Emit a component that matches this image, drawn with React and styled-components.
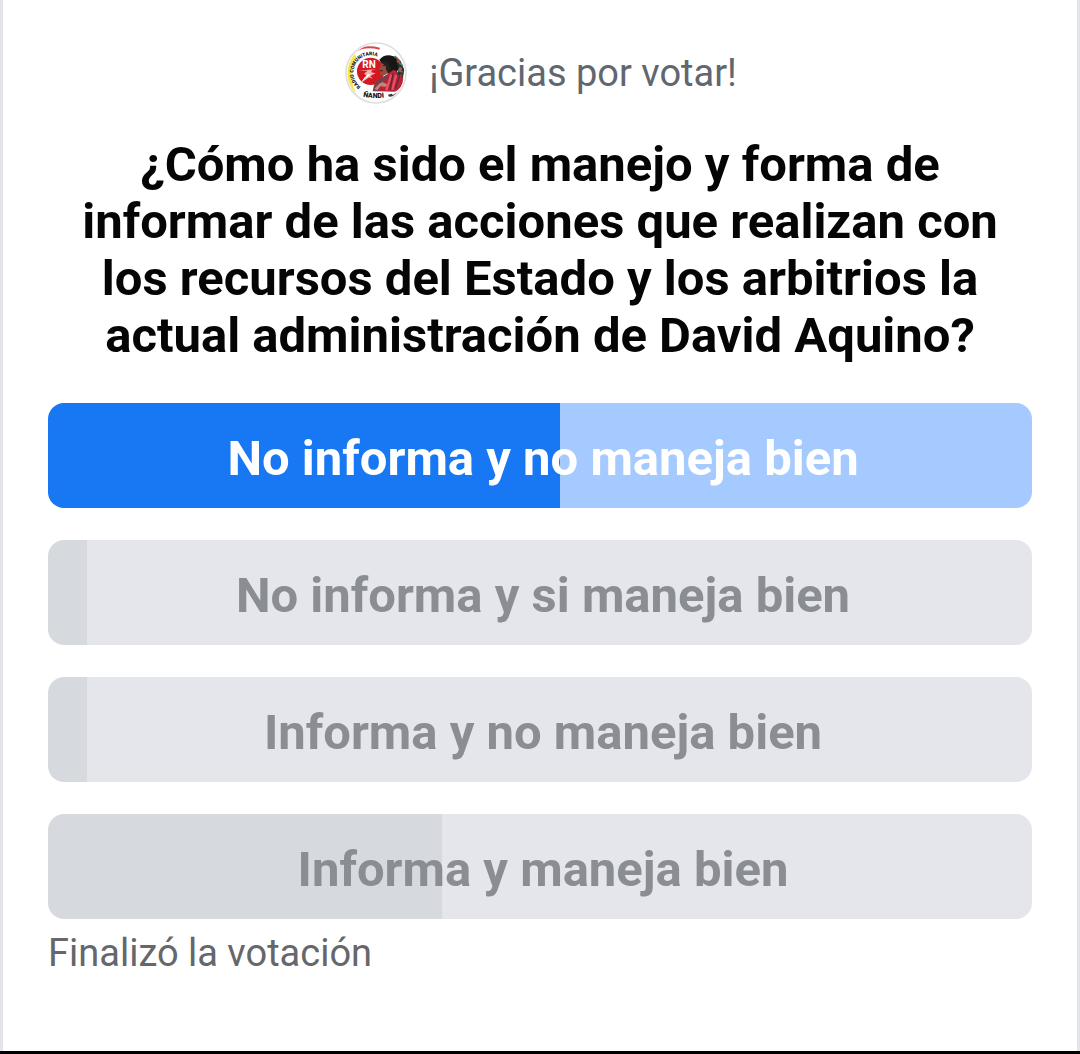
import React from "react";
import styled, { createGlobalStyle } from "styled-components";

const poll = {
  question:
    "¿Cómo ha sido el manejo y forma de informar de las acciones que realizan con los recursos del Estado y los arbitrios la actual administración de David Aquino?",
  options: [
    { label: "No informa y no maneja bien", percent: 52, chosen: true },
    { label: "No informa y si maneja bien", percent: 4 },
    { label: "Informa y no maneja bien", percent: 4 },
    { label: "Informa y maneja bien", percent: 40 },
  ],
};

const StationLogo = () => (
  <Logo viewBox="0 0 186 186" aria-hidden="true">
    <defs>
      <clipPath id="disc">
        <circle cx="93" cy="93" r="86" />
      </clipPath>
      <path id="ring" d="M47 134 A52 52 0 1 1 112 53" />
      <path id="base" d="M54 164 Q88 172 136 164" />
    </defs>
    <circle cx="93" cy="93" r="90" fill="#fff" stroke="#dfdfdf" strokeWidth="5" />
    <g clipPath="url(#disc)">
      <path d="M28 36 Q-10 88 20 146 L40 165 Q2 105 34 45Z" fill="#f4e64c" />
      <path d="M28 29 Q58 8 104 20" stroke="#d84848" strokeWidth="6" fill="none" />
      {/* emblem */}
      <circle cx="77" cy="88" r="41" fill="#d41822" />
      <path d="M40 86 L68 86 L57 95 L66 101 L44 125 L73 106 L83 111 L76 102 L92 94 L79 91 L81 84 L96 81 Z" fill="#f0b3ae" />
      <path d="M49 121 Q58 105 69 96 L77 99 Q61 107 49 121" fill="#fff" />
      {/* hair, face and dress */}
      <path d="M103 53 Q121 33 145 43 Q168 48 165 76 L149 98 L119 92 L112 68Z" fill="#171515" />
      <path d="M108 60 Q105 66 108 73 L101 83 L107 85 L106 98 Q115 104 126 95 L135 77 Q125 61 108 60Z" fill="#8f5140" />
      <path d="M106 61 Q116 55 128 61 L139 80 L132 95 L123 83 L122 71Z" fill="#24201e" />
      <path d="M113 72 L121 70 M106 86 L114 86" stroke="#421c18" strokeWidth="3" />
      <path d="M122 100 L146 83 Q167 94 175 108 Q173 139 150 149 L97 148 L84 143 L113 122Z" fill="#b92336" />
      <path d="M99 113 L123 99 L128 110 L105 126 L99 148 L83 148 L87 129Z" fill="#70424a" />
      <path d="M104 124 Q119 119 128 128 L121 135 L107 132 L97 145 L88 141Z" fill="#c98276" />
      <path d="M139 98 L124 145 M153 98 L142 143" stroke="#e65360" strokeWidth="7" />
      <path d="M144 96 L135 143 M164 101 L151 141" stroke="#63253b" strokeWidth="4" />
      <path d="M150 40 L167 57 L178 83 L174 107 L157 98 L160 76Z" fill="#26392f" />
      <path d="M148 43 L159 50 M162 61 L174 72 M158 85 L173 90" stroke="#54806a" strokeWidth="5" />
      <circle cx="160" cy="57" r="5" fill="#bd454b" />
      <circle cx="166" cy="81" r="5" fill="#d44b5c" />
      <circle cx="168" cy="101" r="4" fill="#a62e40" />
      <path d="M129 158 L140 155 L143 159 L158 151 L153 162 L132 164Z" fill="#403638" />
    </g>
    <RingText>
      <textPath href="#ring">RADIO COMUNITARIA</textPath>
    </RingText>
    <BaseText>
      <textPath href="#base">ÑANDI</textPath>
    </BaseText>
    <Initials x="52" y="77">RN</Initials>
  </Logo>
);

const App = () => (
  <>
    <GlobalStyle />
    <Screen>
      <Page>
        <Header>
          <StationLogo />
          <Thanks>¡Gracias por votar!</Thanks>
        </Header>
        <Question>{poll.question}</Question>
        <Options>
          {poll.options.map((option) => (
            <li key={option.label}>
              <Option disabled $chosen={option.chosen} $percent={option.percent}>
                {option.label}
              </Option>
            </li>
          ))}
        </Options>
        <Status>Finalizó la votación</Status>
      </Page>
    </Screen>
  </>
);

export default App;

const GlobalStyle = createGlobalStyle`
  * {
    box-sizing: border-box;
  }

  body {
    margin: 0;
    background: #ffffff;
    font-family: Roboto, sans-serif;
  }
`;

const Screen = styled.div`
  display: grid;
  min-height: 100vh;
  border-bottom: 3px solid #000000;
`;

const Page = styled.main`
  padding: 42px 45px 32px;
  border: solid #e4e5eb;
  border-width: 0 3px;
`;

//HEADER
const Header = styled.header`
  display: flex;
  justify-content: center;
  align-items: center;
  gap: 22px;
  padding-left: 2px;
`;

const Logo = styled.svg`
  width: 62px;
  height: 62px;
  flex-shrink: 0;
`;

const RingText = styled.text`
  font-size: 15px;
  font-weight: 900;
  fill: #151515;
`;

const BaseText = styled.text`
  font-size: 21px;
  font-weight: 900;
  fill: #151515;
`;

const Initials = styled.text`
  font-size: 30px;
  font-weight: 700;
  fill: #ffffff;
`;

const Thanks = styled.p`
  margin: 0;
  color: #606770;
  font-size: 38px;
  line-height: 48px;
`;

const Question = styled.h1`
  margin: 32px 32px 39px;
  color: #050505;
  font-size: 49px;
  font-weight: 700;
  line-height: 57px;
  text-align: center;
`;

//OPTIONS
const Options = styled.ul`
  display: flex;
  flex-direction: column;
  gap: 32px;
  margin: 0;
  padding: 0;
  list-style: none;
`;

const Option = styled.button`
  display: block;
  width: 100%;
  padding: 27px 0 21px 6px;
  border: 0;
  border-radius: 16px;
  color: ${({ $chosen }) => ($chosen ? "#ffffff" : "#8a8d91")};
  background: ${({ $chosen, $percent }) =>
    `linear-gradient(to right, ${$chosen ? "#1877f2" : "#d6d9de"} ${$percent}%, ${
      $chosen ? "#a5caff" : "#e4e6eb"
    } ${$percent}%)`};
  font-family: inherit;
  font-size: 49px;
  font-weight: 700;
  line-height: 57px;
  text-align: center;
`;

const Status = styled.p`
  margin: 10px 0 0;
  color: #65676b;
  font-size: 38px;
  line-height: 48px;
`;
